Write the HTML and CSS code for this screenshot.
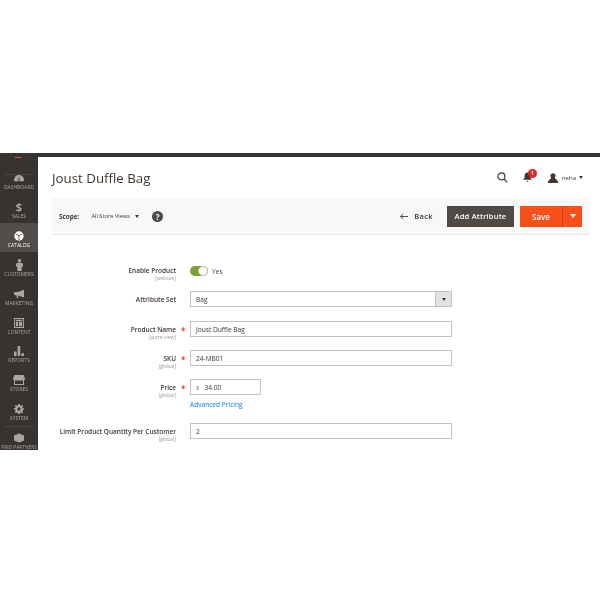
FILE: index.html
```html
<!DOCTYPE html>
<html lang="en">
<head>
<meta charset="utf-8">
<title>Joust Duffle Bag</title>
<link rel="stylesheet" href="styles.css">
</head>
<body>
<div class="shell">
  <nav class="side">
    <div class="logo-tip"></div>
    <a class="item"><svg class="ico" viewBox="0 0 12 10"><path d="M6 1.500a6 5.500 0 0 0-6 5.500c0 .8.200 1.500.6 2h10.800c.4-.5.600-1.200.6-2a6 5.500 0 0 0-6-5.500zm.8 6.800H5.200L5.700 4h.6z"/></svg><span>DASHBOARD</span></a>
    <a class="item"><span class="dollar">$</span><span>SALES</span></a>
    <a class="item active"><svg class="ico" viewBox="0 0 12 12"><circle cx="6" cy="6" r="5.600"/><path class="cut" d="M2 3.500 6 5.500l4-2M6 5.500V11"/></svg><span>CATALOG</span></a>
    <a class="item"><svg class="ico tall" viewBox="0 0 8 14"><circle cx="4" cy="2" r="2"/><path d="M1.500 4.500h5L8 5.500V9H6.500v5h-5V9H0V5.500z"/></svg><span>CUSTOMERS</span></a>
    <a class="item"><svg class="ico" viewBox="0 0 13 11"><path d="M13 0 5 2.800H1.500L0 4v2l1.500 1.200H3L4 11h2L5 7.300l8 2.700z"/></svg><span>MARKETING</span></a>
    <a class="item"><svg class="ico" viewBox="0 0 11 11"><path fill-rule="evenodd" d="M0 0h11v11H0zm1 1v9h9V1zm1 1h7v1.500H2zm0 2.500h2.500V9H2zm3.500 0H9V9H5.500z"/></svg><span>CONTENT</span></a>
    <a class="item"><svg class="ico" viewBox="0 0 11 11"><path d="M0 6h2.800v5H0zm4-6h2.800v11H4zm4 8h3v3H8z"/></svg><span>REPORTS</span></a>
    <a class="item"><svg class="ico wide" viewBox="0 0 12 10"><path fill-rule="evenodd" d="M1.500 0h9L12 3.500c0 1-.5 1.500-1 1.500v5H1V5c-.5 0-1-.5-1-1.500zM2 5.500V9h8V5.500z"/></svg><span>STORES</span></a>
    <a class="item"><svg class="ico" viewBox="0 0 12 12"><path fill-rule="evenodd" d="M5 0h2l.3 1.700 1.200.5L10 1.300 11 2.700l-1 1.300.4 1.200L12 5.500v1.500l-1.600.3-.4 1.200 1 1.300L10 11l-1.500-.9-1.200.5L7 12H5l-.3-1.400-1.200-.5L2 11 1 9.300l1-1.300-.4-1.200L0 6.500V5l1.600-.3.400-1.200-1-1.300L2 1.300l1.500.9 1.200-.5zM6 4a2 2 0 1 0 0 4 2 2 0 0 0 0-4z"/></svg><span>SYSTEM</span></a>
    <a class="item partners"><svg class="ico" viewBox="0 0 12 11"><path d="M6 0l6 2.500v6L6 11 0 8.500v-6z"/></svg><span>FIND PARTNERS</span></a>
  </nav>
  <main class="main">
    <header class="head">
      <h1 class="title">Joust Duffle Bag</h1>
      <div class="tools">
        <svg class="search" viewBox="0 0 12 12"><circle cx="4.800" cy="4.800" r="3.800"/><path d="M7.600 7.600 11.300 11.300"/></svg>
        <div class="bell">
          <svg viewBox="0 0 10 11"><path d="M5 0C3 0 1.800 1.500 1.800 4c0 2-.8 3-1.800 4h10C9 7 8.200 6 8.200 4 8.200 1.500 7 0 5 0zM3.800 9h2.400L5 10.500z"/></svg>
          <span class="badge">1</span>
        </div>
        <svg class="user" viewBox="0 0 11 11"><circle cx="5.500" cy="3" r="2.800"/><path d="M3.500 5.500h4L11 9v2H0V9z"/></svg>
        <span class="uname">neha</span><span class="caret"></span>
      </div>
    </header>
    <div class="bar">
      <div class="scope">
        <span class="scope-l">Scope:</span>
        <span class="scope-v">All Store Views</span><span class="caret scope-c"></span>
        <span class="help">?</span>
      </div>
      <div class="actions">
        <a class="back"><svg viewBox="0 0 9 7"><path d="M3.500.5.700 3.500l2.800 3M.7 3.500H9"/></svg>Back</a>
        <button class="btn dark">Add Attribute</button>
        <div class="split"><button class="btn save">Save</button><button class="btn more"><span class="tri"></span></button></div>
      </div>
    </div>
    <form class="form">
      <div class="row r-toggle">
        <div class="lab"><strong>Enable Product</strong><small>[website]</small></div>
        <div class="ctl flag"><span class="toggle"><i></i></span><span class="yes">Yes</span></div>
      </div>
      <div class="row r-set">
        <div class="lab"><strong>Attribute Set</strong></div>
        <div class="ctl"><div class="select"><span>Bag</span><b><i></i></b></div></div>
      </div>
      <div class="row r-field">
        <div class="lab req"><strong>Product Name</strong><small>[store view]</small></div>
        <div class="ctl"><div class="input">Joust Duffle Bag</div></div>
      </div>
      <div class="row r-field">
        <div class="lab req"><strong>SKU</strong><small>[global]</small></div>
        <div class="ctl"><div class="input">24-MB01</div></div>
      </div>
      <div class="row r-price">
        <div class="lab req"><strong>Price</strong><small>[global]</small></div>
        <div class="ctl">
          <div class="input price"><span class="cur">$</span>34.00</div>
          <a class="adv">Advanced Pricing</a>
        </div>
      </div>
      <div class="row r-field">
        <div class="lab"><strong>Limit Product Quantity Per Customer</strong><small>[global]</small></div>
        <div class="ctl"><div class="input">2</div></div>
      </div>
    </form>
  </main>
</div>
</body>
</html>
```
FILE: styles.css
```css
* { box-sizing: border-box; }
html, body { margin: 0; padding: 0; background: #fff; }
body { padding-top: 153px; font-family: "Open Sans", sans-serif; color: #41362f; }
.shell { display: flex; height: 297px; overflow: hidden; border-top: 4px solid #373330; filter: blur(.4px); }
.side { width: 38px; flex: none; background: #373330; color: #aaa6a0; display: flex; flex-direction: column; position: relative; overflow: hidden; padding-top: 8.500px; }
.logo-tip { position: absolute; left: 15px; top: -1px; width: 6px; height: 2px; background: #e3502b; }
.side::before { content: ""; position: absolute; left: 4px; right: 4px; top: 17px; height: 1px; background: #4a4542; }
.item { height: 28.850px; flex: none; display: flex; flex-direction: column; align-items: center; justify-content: flex-end; padding-bottom: 3px; font-size: 5px; line-height: 7px; white-space: nowrap; color: #aaa6a0; }
.item.active { background: #524d49; color: #fff; }
.ico { width: 10px; height: 10px; fill: #aaa6a0; margin-bottom: 1px; }
.ico.wide { width: 12px; }
.active .ico { fill: #fff; }
.cut { fill: none; stroke: #524d49; stroke-width: 1; }
.ico.tall { width: 7px; height: 12px; margin-bottom: 0; }
.dollar { font-size: 11px; line-height: 11px; font-weight: 700; color: #aaa6a0; margin-bottom: 1px; }
.partners { position: relative; }
.partners::before { content: ""; position: absolute; left: 4px; right: 4px; top: 1px; height: 1px; background: #4a4542; }
.partners span { font-size: 4.800px; }
.main { flex: 1; min-width: 0; padding: 0 11px 0 14px; }
.head { height: 41px; display: flex; align-items: center; justify-content: space-between; }
.title { margin: 0; font-size: 13.300px; font-weight: 400; color: #41362f; }
.tools { display: flex; align-items: center; padding-right: 6px; }
.search { width: 11px; height: 11px; fill: none; stroke: #41362f; stroke-width: 1.300; margin-right: 15px; }
.bell { position: relative; width: 9px; height: 11px; margin-right: 16px; }
.bell svg { display: block; width: 9px; height: 11px; fill: #41362f; }
.badge { position: absolute; left: 5px; top: -3px; width: 9px; height: 9px; border-radius: 50%; background: #e22626; color: #fff; font-size: 5px; line-height: 9px; text-align: center; font-weight: 700; }
.user { width: 10px; height: 10px; fill: #41362f; margin-right: 4px; }
.uname { font-size: 6px; color: #41362f; margin-right: 3px; }
.caret { display: inline-block; width: 0; height: 0; border: 2.500px solid transparent; border-top: 3px solid #41362f; border-bottom: 0; }
.bar { height: 37px; background: #f8f8f8; border-bottom: 1px solid #e8e8e8; display: flex; align-items: center; justify-content: space-between; padding: 0 7px; }
.scope { display: flex; align-items: center; }
.scope-l { font-size: 6.400px; font-weight: 700; color: #41362f; margin-right: 12px; }
.scope-v { font-size: 5.700px; color: #41362f; }
.scope-c { margin: 0 13px 0 5px; }
.help { width: 11px; height: 11px; border-radius: 50%; background: #514943; color: #fff; font-size: 8px; line-height: 11px; font-weight: 700; text-align: center; }
.actions { display: flex; align-items: center; }
.back { display: flex; align-items: center; font-size: 7.600px; font-weight: 600; color: #41362f; letter-spacing: .3px; margin-right: 14px; }
.back svg { width: 8px; height: 7px; fill: none; stroke: #41362f; stroke-width: 1; margin-right: 6px; }
.btn { border: 0; font-family: inherit; font-size: 8px; font-weight: 600; color: #fff; height: 21px; padding: 0; display: block; }
.dark { width: 67px; font-size: 7.500px; background: #514943; margin-right: 6px; letter-spacing: .2px; }
.split { display: flex; }
.save { width: 43px; background: #f9501a; border-right: 1px solid #c8401a; }
.more { width: 19px; background: #f9501a; display: flex; align-items: center; justify-content: center; }
.tri { width: 0; height: 0; border: 3.500px solid transparent; border-top: 4px solid #fff; border-bottom: 0; }
.form { padding-top: 30px; }
.row { display: flex; align-items: flex-start; }
.lab { width: 124px; flex: none; text-align: right; position: relative; padding-top: 4px; white-space: nowrap; }
.lab strong { display: block; font-size: 6.500px; line-height: 10px; font-weight: 600; color: #41362f; }
.lab small { display: block; font-size: 5px; line-height: 5px; color: #999; }
.req::after { content: "*"; position: absolute; left: 129px; top: 5px; font-size: 8px; line-height: 10px; color: #e22626; font-weight: 600; }
.ctl { margin-left: 14px; width: 262px; flex: none; }
.input, .select { height: 16px; border: 1px solid #c2c2c2; background: #fff; font-size: 6.600px; line-height: 15.500px; padding-left: 5px; color: #41362f; }
.select { display: flex; justify-content: space-between; }
.select b { width: 16px; height: 14px; background: #e3e3e3; border-left: 1px solid #c2c2c2; display: flex; align-items: center; justify-content: center; }
.select i { width: 0; height: 0; border: 2.500px solid transparent; border-top: 3px solid #41362f; border-bottom: 0; }
.flag { display: flex; align-items: center; height: 10px; margin-top: 1px; }
.toggle { width: 18px; height: 10px; border-radius: 5px; background: #79a22e; position: relative; margin-right: 4px; }
.toggle i { position: absolute; right: 0; top: 0; width: 10px; height: 10px; border-radius: 50%; background: #fff; border: 1px solid #c2c2c2; }
.yes { font-size: 6.600px; color: #41362f; }
.r-toggle { height: 26px; }
.r-toggle .lab { padding-top: 1px; }
.r-set { height: 30px; }
.r-field { height: 29px; }
.r-price { height: 44px; }
.price { width: 71px; }
.cur { font-size: 6px; color: #8a8a8a; margin-right: 5px; }
.adv { display: block; font-size: 6.600px; line-height: 10px; margin-top: 5px; color: #007bdb; }
```
